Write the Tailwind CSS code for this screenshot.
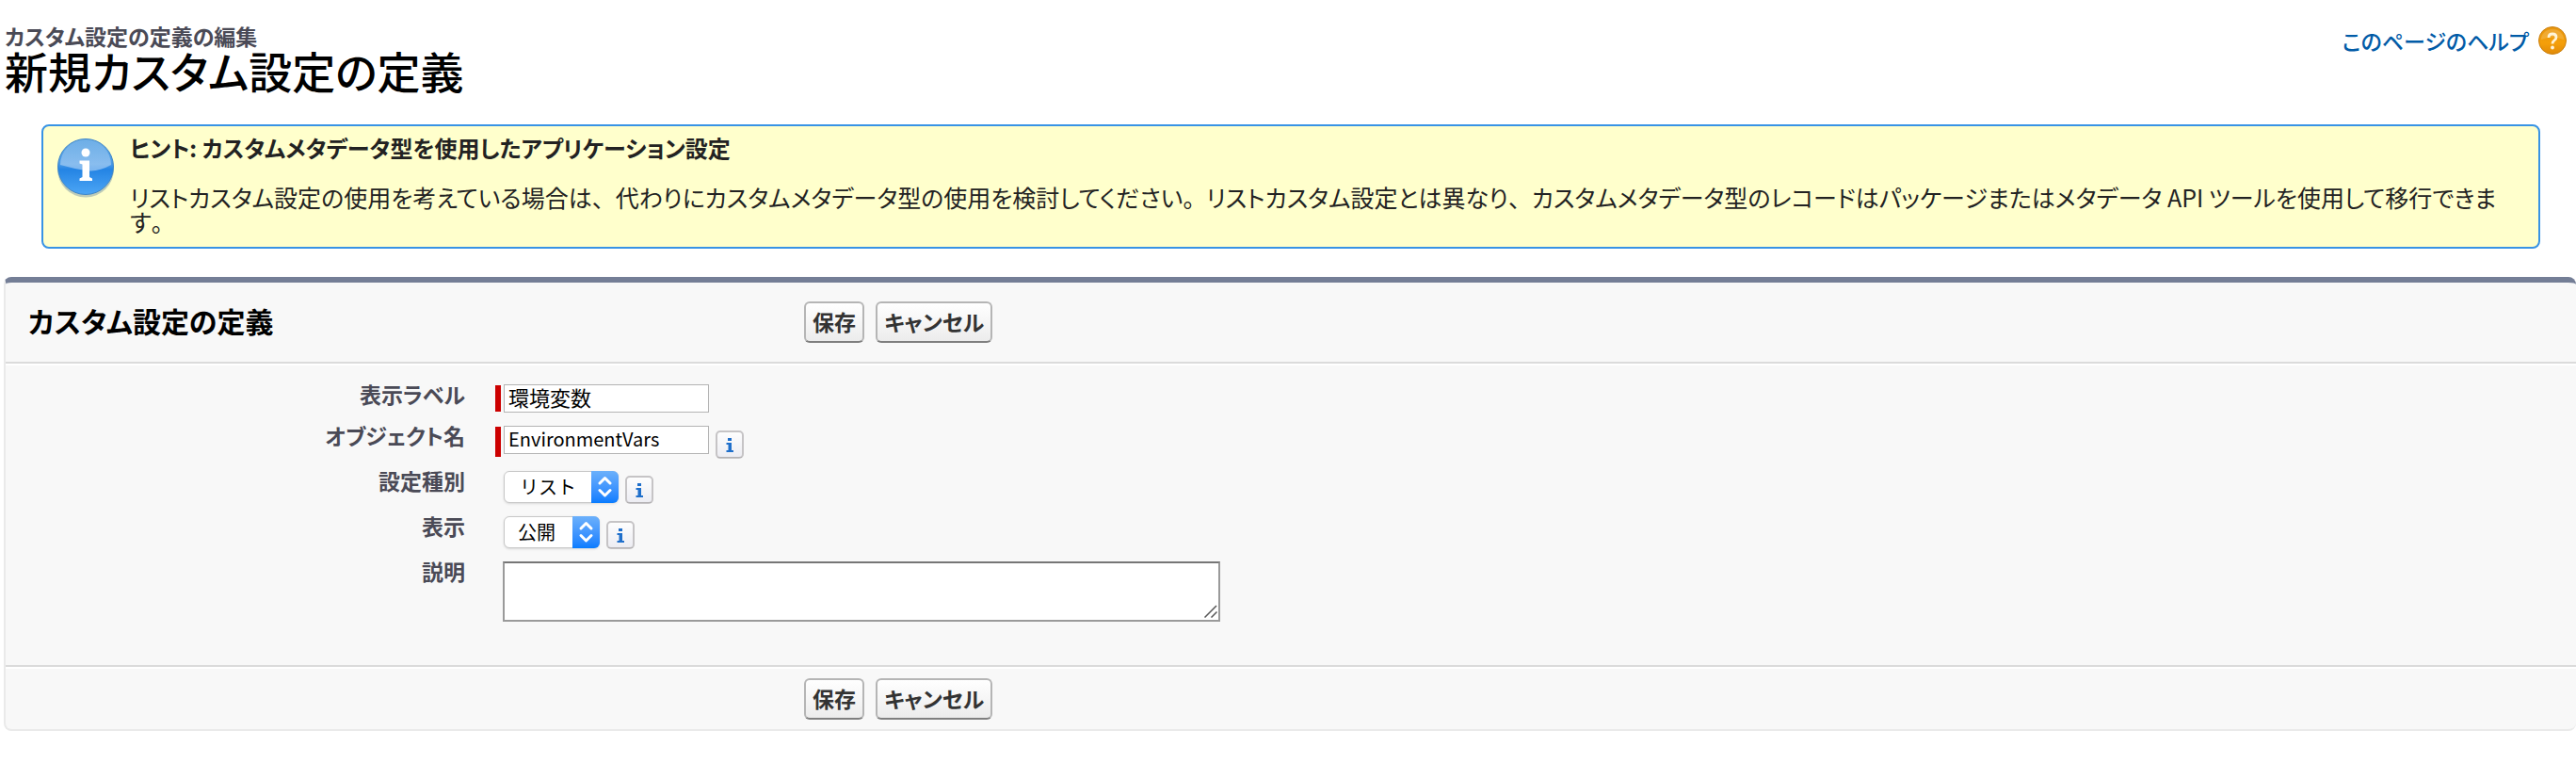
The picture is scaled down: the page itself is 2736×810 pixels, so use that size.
<!DOCTYPE html>
<html lang="ja">
<head>
<meta charset="utf-8">
<meta name="viewport" content="width=device-width, initial-scale=1">
<title>新規カスタム設定の定義</title>
<script src="https://cdn.jsdelivr.net/npm/@tailwindcss/browser@4"></script>
</head>
<body class="bg-white pl-1 font-['Noto_Sans_CJK_JP',sans-serif] text-[23px] leading-[26px] text-black [font-feature-settings:'palt']">
  <svg class="absolute size-0" aria-hidden="true">
    <defs>
      <linearGradient id="key" x1="0" y1="0" x2="0" y2="1"><stop offset="0" stop-color="#fefefe"/><stop offset="1" stop-color="#ececf2"/></linearGradient>
      <linearGradient id="ball" x1="0" y1="0" x2="0" y2="1"><stop offset="0" stop-color="#5ea6e4"/><stop offset=".45" stop-color="#4a9ae6"/><stop offset=".55" stop-color="#2484e4"/><stop offset="1" stop-color="#4da6f5"/></linearGradient>
      <linearGradient id="gloss" x1="0" y1="0" x2="0" y2="1"><stop offset="0" stop-color="#fff" stop-opacity=".1"/><stop offset="1" stop-color="#fff" stop-opacity=".42"/></linearGradient>
      <linearGradient id="amber" x1="0" y1="0" x2="0" y2="1"><stop offset="0" stop-color="#e8960c"/><stop offset=".6" stop-color="#f59f0a"/><stop offset="1" stop-color="#e08a08"/></linearGradient>
    </defs>
    <symbol id="info" viewBox="0 0 30 30">
      <rect x="1" y="1" width="28" height="28" rx="4" fill="url(#key)" stroke="#c6c4c6" stroke-width="2"/>
      <path d="M2 28.500h26" stroke="#b4b2b4"/>
      <path d="M13 8h4v3h-4zM11.500 13H17v8h2v2h-7.500v-2h2v-6h-2z" fill="#1f6fcb"/>
    </symbol>
  </svg>

  <header class="flex items-start justify-between pt-[25px]">
    <div class="pl-px">
      <p class="font-bold text-[#4a4a56]">カスタム設定の定義の編集</p>
      <h1 class="text-[46px] leading-[46px] font-medium">新規カスタム設定の定義</h1>
    </div>
    <a href="#" class="flex items-center gap-[10px] pt-[3px] pr-[10px] text-[#015ba7]">
      <span class="font-medium">このページのヘルプ</span>
      <svg class="size-[30px]" viewBox="0 0 30 30">
        <circle cx="15" cy="15" r="14.500" fill="url(#amber)" stroke="#c97f10"/>
        <path d="M3 14a12 11 0 0 1 24 0q-12-5-24 0z" fill="#fff" opacity=".16"/>
        <path d="M11 12q0-4 4-4t4 3.500q0 2-2 3.300t-2 3.700" fill="none" stroke="#fff4d8" stroke-width="2.800"/>
        <circle cx="15" cy="22.500" r="1.900" fill="#fff4d8"/>
      </svg>
    </a>
  </header>

  <section class="mt-[35px] mr-[38px] ml-[40px] flex gap-4 rounded-lg border-2 border-[#3893e5] bg-[#ffffcc] pt-[10px] pr-10 pb-[14px] pl-[14px] text-[25px] text-[#222]">
    <svg class="mt-[2px] h-[64px] w-[62px] shrink-0" viewBox="0 0 62 64">
      <ellipse cx="31" cy="33.500" rx="30" ry="30" fill="#6f8fa0" opacity=".45"/>
      <circle cx="31" cy="31" r="29.500" fill="url(#ball)" stroke="#3f86c8"/>
      <path d="M4 29a27 27 0 0 1 54 0q-14 8-27 6T4 29z" fill="url(#gloss)"/>
      <circle cx="31" cy="16" r="4.500" fill="#fff"/>
      <path d="M24.500 24.500H35V42l3 1.500V46H24.500v-2.500l3-1.500V28.500l-3-1z" fill="#fff"/>
    </svg>
    <div class="min-w-0">
      <h2 class="text-[24px] font-bold">ヒント: カスタムメタデータ型を使用したアプリケーション設定</h2>
      <p class="mt-[26px]">リストカスタム設定の使用を考えている場合は<span class="[font-feature-settings:normal]">、</span>代わりにカスタムメタデータ型の使用を検討してください<span class="[font-feature-settings:normal]">。</span>リストカスタム設定とは異なり<span class="[font-feature-settings:normal]">、</span>カスタムメタデータ型のレコードはパッケージまたはメタデータ API ツールを使用して移行できます<span class="[font-feature-settings:normal]">。</span></p>
    </div>
  </section>

  <form class="mt-[30px] overflow-hidden rounded-lg border-t-[6px] border-b-2 border-l-2 border-t-[#747e96] border-b-[#eaeaea] border-l-[#eaeaea] bg-[#f8f8f8]">
    <div class="flex h-[86px] items-center border-b-2 border-[#dbdbdb] pl-6">
      <h2 class="w-[824px] pb-1 text-[30px] leading-[40px] font-bold">カスタム設定の定義</h2>
      <div class="flex gap-3 font-bold text-[#333]">
        <button type="submit" class="h-11 rounded-md border-2 border-[#b5b5b5] border-b-[#7f7f7f] bg-linear-to-b from-white to-[#ececec] px-[7px] pb-[2px]">保存</button>
        <button type="button" class="h-11 rounded-md border-2 border-[#b5b5b5] border-b-[#7f7f7f] bg-linear-to-b from-white to-[#ececec] px-[7px] pb-[2px]">キャンセル</button>
      </div>
    </div>

    <div class="flex flex-col gap-[14px] border-t-2 border-white pt-5 pb-[46px]">
      <div class="flex h-[30px] items-start">
        <label for="label" class="w-[488px] text-right leading-5 font-bold text-[#4a4a56]">表示ラベル</label>
        <div class="ml-8 flex gap-[3px]">
          <span class="my-px w-[6px] bg-[#c00]"></span>
          <input id="label" type="text" value="環境変数" class="h-[30px] w-[218px] border border-[#b4b4b4] bg-white px-1 pb-1 text-[22px] [font-feature-settings:normal]">
        </div>
      </div>
      <div class="flex h-[34px] items-start">
        <label for="name" class="w-[488px] text-right leading-5 font-bold text-[#4a4a56]">オブジェクト名</label>
        <div class="ml-8 flex items-start gap-[3px]">
          <span class="mt-px h-8 w-[6px] bg-[#c00]"></span>
          <input id="name" type="text" value="EnvironmentVars" class="h-[30px] w-[218px] border border-[#b4b4b4] bg-white px-1 pb-1 text-[20px]">
          <button type="button" aria-label="オブジェクト名の情報" class="mt-[5px] ml-1"><svg class="size-[30px]"><use href="#info"/></svg></button>
        </div>
      </div>
      <div class="flex h-[34px] items-start">
        <label for="kind" class="w-[488px] text-right leading-5 font-bold text-[#4a4a56]">設定種別</label>
        <div class="ml-[41px] flex items-start gap-[7px]">
          <div class="relative">
            <select id="kind" class="h-[34px] w-[122px] appearance-none rounded-md border border-[#c8c8c8] bg-white pl-4 text-[20px] shadow-sm [font-feature-settings:normal]"><option>リスト</option></select>
            <svg class="pointer-events-none absolute top-0 right-0 h-[34px] w-[29px] rounded-r-md bg-linear-to-b from-[#6bb0fb] to-[#057cff]" viewBox="0 0 29 34" fill="none" stroke="#fff" stroke-width="3" stroke-linecap="round" stroke-linejoin="round"><path d="M9 13l5.500-5.500L20 13M9 20.500l5.500 5.500 5.500-5.500"/></svg>
          </div>
          <button type="button" aria-label="設定種別の情報" class="mt-[5px]"><svg class="size-[30px]"><use href="#info"/></svg></button>
        </div>
      </div>
      <div class="flex h-[34px] items-start">
        <label for="view" class="w-[488px] text-right leading-5 font-bold text-[#4a4a56]">表示</label>
        <div class="ml-[41px] flex items-start gap-[7px]">
          <div class="relative">
            <select id="view" class="h-[34px] w-[102px] appearance-none rounded-md border border-[#c8c8c8] bg-white pl-[14px] text-[20px] shadow-sm [font-feature-settings:normal]"><option>公開</option></select>
            <svg class="pointer-events-none absolute top-0 right-0 h-[34px] w-[29px] rounded-r-md bg-linear-to-b from-[#6bb0fb] to-[#057cff]" viewBox="0 0 29 34" fill="none" stroke="#fff" stroke-width="3" stroke-linecap="round" stroke-linejoin="round"><path d="M9 13l5.500-5.500L20 13M9 20.500l5.500 5.500 5.500-5.500"/></svg>
          </div>
          <button type="button" aria-label="表示の情報" class="mt-[5px]"><svg class="size-[30px]"><use href="#info"/></svg></button>
        </div>
      </div>
      <div class="flex items-start">
        <label for="desc" class="w-[488px] text-right leading-5 font-bold text-[#4a4a56]">説明</label>
        <div class="relative ml-10">
          <textarea id="desc" class="block h-16 w-[762px] resize-none border-2 border-[#9a9a9a] border-t-[#767676] bg-white"></textarea>
          <svg class="pointer-events-none absolute right-[3px] bottom-1 size-[14px]" viewBox="0 0 14 14" stroke="#555" stroke-width="1.500"><path d="M.5 13.500L13 1M7.500 13.500L13.500 7.500"/></svg>
        </div>
      </div>
    </div>

    <div class="border-t-2 border-[#dbdbdb]">
      <div class="flex gap-3 border-t-2 border-white py-[10px] pl-[848px] font-bold text-[#333]">
        <button type="submit" class="h-11 rounded-md border-2 border-[#b5b5b5] border-b-[#7f7f7f] bg-linear-to-b from-white to-[#ececec] px-[7px] pb-[2px]">保存</button>
        <button type="button" class="h-11 rounded-md border-2 border-[#b5b5b5] border-b-[#7f7f7f] bg-linear-to-b from-white to-[#ececec] px-[7px] pb-[2px]">キャンセル</button>
      </div>
    </div>
  </form>
</body>
</html>
